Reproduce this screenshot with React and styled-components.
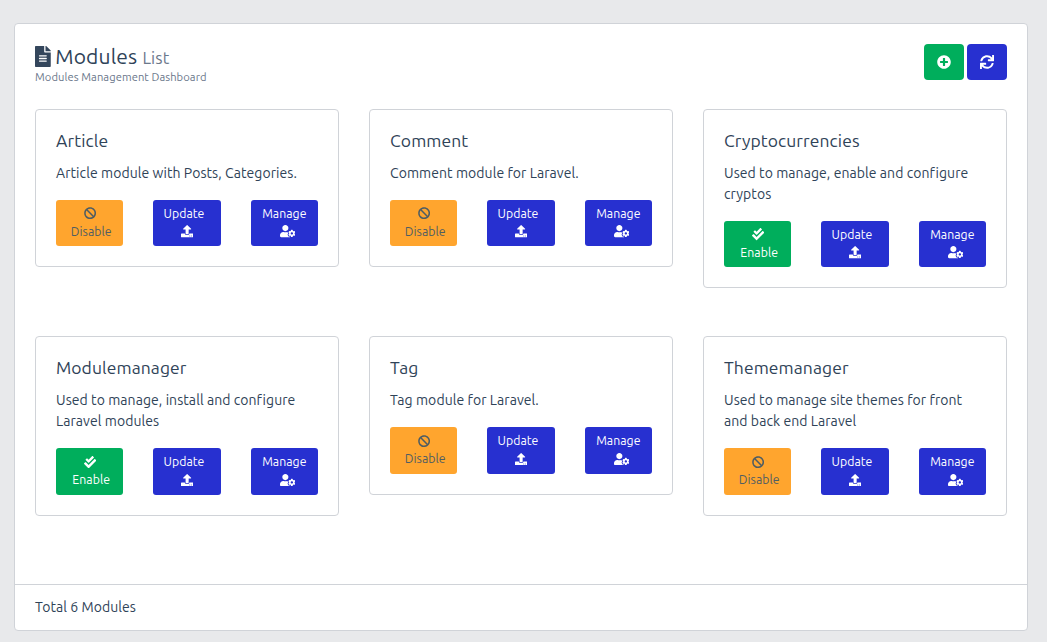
import React from "react";
import styled, { createGlobalStyle } from "styled-components";
import {
  FaFileAlt, FaPlusCircle, FaSync, FaBan, FaCheckDouble, FaUpload, FaUserCog,
} from "react-icons/fa";

const GlobalStyle = createGlobalStyle`
  * { box-sizing: border-box; }
  body {
    margin: 0;
    background: #e8e9eb;
    color: #2f4358;
    font-family: Ubuntu, "Noto Sans", "Open Sans", sans-serif;
    font-size: 14px;
    line-height: 21px;
    letter-spacing: 0.07px;
  }
  h1, h2, p { margin: 0; font-weight: 400; }
`;

const tones = {
  success: { background: "#00ae5c", color: "#fff" },
  warning: { background: "#ffa52e", color: "#4f5d63" },
  primary: { background: "#2730d0", color: "#fff" },
};

const Page = styled.main`
  height: 642px;
  padding: 23px 19px 11px 14px;
`;

const Panel = styled.section`
  display: flex;
  flex-direction: column;
  height: 608px;
  background: #fff;
  border: 1px solid #d0d3d8;
  border-radius: 4px;
`;

const PanelBody = styled.div`
  flex: 1;
  padding: 20px 20px 0;
`;

const Header = styled.header`
  display: flex;
  justify-content: space-between;
  height: 65px;
`;

const Heading = styled.h1`
  display: flex;
  align-items: baseline;
  height: 25px;
  line-height: 25px;
  font-size: 21px;
  letter-spacing: 0.16px;

  svg { width: 15.75px; height: 21px; align-self: center; margin-right: 4.5px; color: #34465c; }
`;

const HeadingNote = styled.small`
  margin-left: 5px;
  font-size: 16.8px;
  color: #6b788b;
`;

const Subtitle = styled.p`
  height: 16px;
  line-height: 16px;
  font-size: 11.2px;
  color: #6b788b;
`;

const Toolbar = styled.div`
  display: flex;
  gap: 3px;
`;

const ToolButton = styled.button`
  display: flex;
  align-items: center;
  justify-content: center;
  width: 40px;
  height: 36px;
  padding: 0;
  border: 0;
  border-radius: 4px;
  color: #fff;
  background: ${({ $tone }) => tones[$tone].background};
  font-size: 14px;

  svg { display: block; margin-right: 1px; }
`;

const Modules = styled.div`
  display: grid;
  grid-template-columns: repeat(3, 304px);
  gap: 48px 30px;
  align-items: start;
`;

const Card = styled.article`
  padding: 20px;
  border: 1px solid #d0d3d8;
  border-radius: 4px;
`;

const CardTitle = styled.h2`
  margin-bottom: 11.5px;
  font-size: 17.5px;
  line-height: 21px;
  letter-spacing: 0.09px;
`;

const CardText = styled.p`
  margin-bottom: 16.5px;
  white-space: pre-line;
`;

const Actions = styled.div`
  display: grid;
  grid-template-columns: repeat(3, 1fr);
  gap: 30px;
`;

const ActionButton = styled.button`
  display: flex;
  flex-direction: column;
  align-items: center;
  height: 46.375px;
  padding: ${({ $tone }) => ($tone === "primary" ? 4.5 : 4.2)}px 0 0;
  border: 0;
  border-radius: 3px;
  background: ${({ $tone }) => tones[$tone].background};
  color: ${({ $tone }) => tones[$tone].color};
  font: 12.25px/18.375px Ubuntu, "Noto Sans", "Open Sans", sans-serif;
  letter-spacing: 0.05px;
`;

const ActionLabel = styled.span`
  padding-left: ${({ $left }) => $left || 0}px;
  padding-right: ${({ $right }) => $right || 0}px;
`;

const ActionIcon = styled.span`
  display: flex;
  align-items: center;
  height: ${({ $above }) => ($above ? 18.6 : 17)}px;
  padding-left: ${({ $left }) => $left || 0}px;

  svg {
    display: block;
    flex: none;
    height: 12.25px;
    width: ${({ $wide }) => ($wide ? 15.3 : 12.25)}px;
  }
`;

const Footer = styled.footer`
  height: 46px;
  padding: 12px 20px;
  border-top: 1px solid #d0d3d8;
`;

const modules = [
  { name: "Article", text: "Article module with Posts, Categories." },
  { name: "Comment", text: "Comment module for Laravel." },
  { name: "Cryptocurrencies", text: "Used to manage, enable and configure\ncryptos", enable: true },
  { name: "Modulemanager", text: "Used to manage, install and configure\nLaravel modules", enable: true },
  { name: "Tag", text: "Tag module for Laravel." },
  { name: "Thememanager", text: "Used to manage site themes for front\nand back end Laravel" },
];

function ModuleCard({ name, text, enable }) {
  return (
    <Card>
      <CardTitle>{name}</CardTitle>
      <CardText>{text}</CardText>
      <Actions>
        <ActionButton $tone={enable ? "success" : "warning"}>
          <ActionIcon $above $left={0.6}>{enable ? <FaCheckDouble /> : <FaBan />}</ActionIcon>
          <ActionLabel $left={3}>{enable ? "Enable" : "Disable"}</ActionLabel>
        </ActionButton>
        <ActionButton $tone="primary">
          <ActionLabel $right={6}>Update</ActionLabel>
          <ActionIcon><FaUpload /></ActionIcon>
        </ActionButton>
        <ActionButton $tone="primary">
          <ActionLabel>Manage</ActionLabel>
          <ActionIcon $left={6} $wide><FaUserCog /></ActionIcon>
        </ActionButton>
      </Actions>
    </Card>
  );
}

export default function App() {
  return (
    <Page>
      <GlobalStyle />
      <Panel>
        <PanelBody>
          <Header>
            <div>
              <Heading><FaFileAlt />Modules <HeadingNote>List</HeadingNote></Heading>
              <Subtitle>Modules Management Dashboard</Subtitle>
            </div>
            <Toolbar>
              <ToolButton $tone="success" aria-label="Add module"><FaPlusCircle /></ToolButton>
              <ToolButton $tone="primary" aria-label="Refresh"><FaSync /></ToolButton>
            </Toolbar>
          </Header>
          <Modules>
            {modules.map((module) => <ModuleCard key={module.name} {...module} />)}
          </Modules>
        </PanelBody>
        <Footer>Total 6 Modules</Footer>
      </Panel>
    </Page>
  );
}
